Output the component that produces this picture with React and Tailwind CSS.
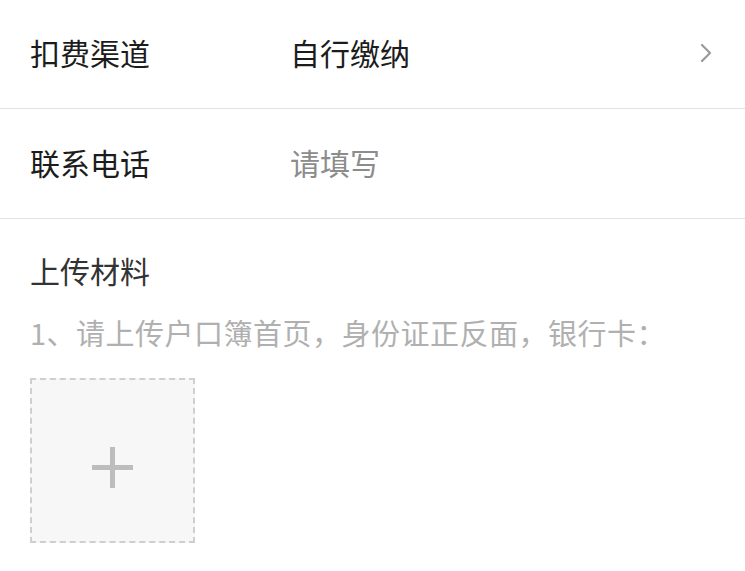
export default function App() {
  return (
    <div
      className="w-[745px] h-[571px] bg-white overflow-hidden"
      style={{ fontFamily: '"Noto Sans CJK SC", "Noto Sans", sans-serif' }}
    >
      {/* 扣费渠道 */}
      <div className="h-[109px] flex items-center pl-[30px] pr-[32px] pb-[4px] border-b border-[#e2e2e2]">
        <span className="w-[260px] text-[30px] leading-[40px] text-[#1c1c1c]">扣费渠道</span>
        <span className="flex-1 text-[30px] leading-[40px] text-[#1c1c1c]">自行缴纳</span>
        <svg width="14" height="22" viewBox="0 0 14 22" fill="none" className="mt-[2px]">
          <path d="M3 3 L11 11 L3 19" stroke="#999" strokeWidth="2.2" strokeLinecap="round" strokeLinejoin="round" />
        </svg>
      </div>

      {/* 联系电话 */}
      <div className="h-[110px] flex items-center pl-[30px] pr-[32px] pb-[4px] border-b border-[#e2e2e2]">
        <span className="w-[260px] text-[30px] leading-[40px] text-[#1c1c1c]">联系电话</span>
        <span className="flex-1 text-[30px] leading-[40px] text-[#8c8c8c]">请填写</span>
      </div>

      {/* 上传材料 */}
      <div className="pt-[31px] pl-[30px] flex flex-col">
        <span className="text-[30px] leading-[40px] text-[#333]">上传材料</span>
        <span className="mt-[22px] text-[29px] leading-[40px] text-[#b0b0b0] tracking-[0.5px]">
          1、请上传户口簿首页，身份证正反面，银行卡：
        </span>
        <div className="mt-[26px] w-[165px] h-[165px] border-2 border-dashed border-[#cfcfcf] bg-[#f7f7f7] flex items-center justify-center">
          <svg width="41" height="41" viewBox="0 0 41 41" className="mt-[14px]">
            <rect x="0" y="18" width="41" height="5" fill="#bdbdbd" />
            <rect x="18" y="0" width="5" height="41" fill="#bdbdbd" />
          </svg>
        </div>
      </div>
    </div>
  );
}
